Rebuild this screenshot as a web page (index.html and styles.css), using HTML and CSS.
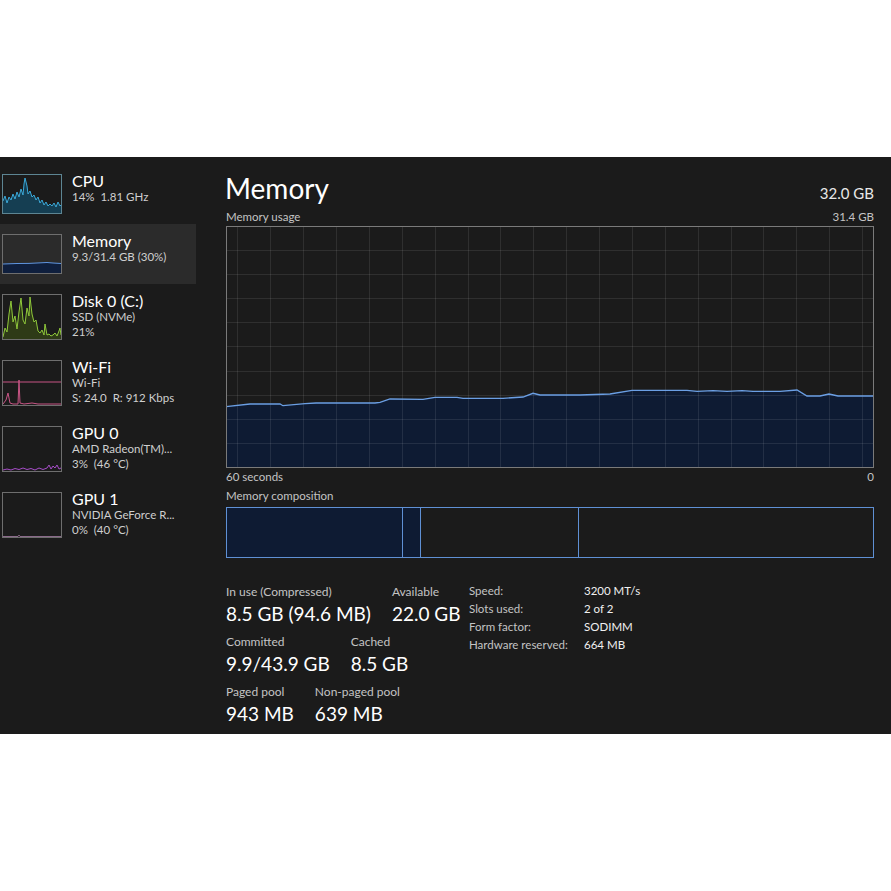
FILE: index.html
```html
<!DOCTYPE html>
<html lang="en">

<head>
  <meta charset="UTF-8">
  <meta name="viewport" content="width=device-width, initial-scale=1.0">
  <title>Task Manager - Memory</title>
  <link rel="stylesheet" href="styles.css">
</head>

<body>
  <div class="tm">
    <nav class="side">
      <div class="item">
        <div class="thumb thumb-cpu">
          <svg viewBox="0 0 58 38" preserveAspectRatio="none">
            <path class="fill" fill="#153e52" d="M0,38 L0,26 2,21 4,28 6,22 8,25 10,19 12,24 14,17 16,22 18,14 20,20 21,9 22,3 24,11 25,19 27,16 29,22 31,20 33,25 35,22 37,28 39,25 41,30 43,27 45,31 47,29 49,31 51,28 53,32 55,27 57,31 58,30 58,38 Z" />
            <polyline stroke="#3aa8d8" points="0,26 2,21 4,28 6,22 8,25 10,19 12,24 14,17 16,22 18,14 20,20 21,9 22,3 24,11 25,19 27,16 29,22 31,20 33,25 35,22 37,28 39,25 41,30 43,27 45,31 47,29 49,31 51,28 53,32 55,27 57,31 58,30" />
          </svg>
        </div>
        <div class="info">
          <div class="name">CPU</div>
          <div class="sub">14%&nbsp; 1.81 GHz</div>
        </div>
      </div>

      <div class="item active">
        <div class="thumb">
          <svg viewBox="0 0 58 38" preserveAspectRatio="none">
            <path fill="#0f1f3d" d="M0,38 L0,29 14,28.5 26,28.4 34,28 44,27.5 50,28 58,28.5 58,38 Z" />
            <polyline stroke="#5f95e0" points="0,29 14,28.5 26,28.4 34,28 44,27.5 50,28 58,28.5" />
          </svg>
        </div>
        <div class="info">
          <div class="name">Memory</div>
          <div class="sub">9.3/31.4 GB (30%)</div>
        </div>
      </div>

      <div class="item">
        <div class="thumb">
          <svg viewBox="0 0 58 44" preserveAspectRatio="none">
            <path fill="#2e3a17" d="M0,44 L0,42 2,33 4,37 6,19 8,6 10,27 12,21 14,34 16,17 18,3 20,25 22,29 24,13 26,21 27,2 29,19 31,27 33,25 35,36 37,38 39,35 41,40 42,29 44,40 46,39 48,41 50,40 52,38 54,41 56,36 57,33 58,40 58,44 Z" />
            <polyline stroke="#8fc83a" points="0,42 2,33 4,37 6,19 8,6 10,27 12,21 14,34 16,17 18,3 20,25 22,29 24,13 26,21 27,2 29,19 31,27 33,25 35,36 37,38 39,35 41,40 42,29 44,40 46,39 48,41 50,40 52,38 54,41 56,36 57,33 58,40" />
          </svg>
        </div>
        <div class="info">
          <div class="name">Disk 0 (C:)</div>
          <div class="sub">SSD (NVMe)</div>
          <div class="sub">21%</div>
        </div>
      </div>

      <div class="item">
        <div class="thumb">
          <svg viewBox="0 0 58 44" preserveAspectRatio="none">
            <line x1="0" y1="21" x2="58" y2="21" stroke="#c85585" />
            <polyline stroke="#c85585" points="0,43 3,39 5,32 7,42 10,43 15,43 16,19 17,42 21,43 29,42 35,43 58,43" />
          </svg>
        </div>
        <div class="info">
          <div class="name">Wi-Fi</div>
          <div class="sub">Wi-Fi</div>
          <div class="sub">S: 24.0&nbsp; R: 912 Kbps</div>
        </div>
      </div>

      <div class="item">
        <div class="thumb">
          <svg viewBox="0 0 58 44" preserveAspectRatio="none">
            <polyline stroke="#a74dc9" points="0,43 4,42 8,43 12,41.5 16,42.5 20,41 24,42.5 28,41.5 32,43 36,41 40,42.5 44,41 46,38 48,42 50,39 52,41 54,38 56,42 58,41" />
          </svg>
        </div>
        <div class="info">
          <div class="name">GPU 0</div>
          <div class="sub">AMD Radeon(TM)...</div>
          <div class="sub">3%&nbsp; (46 °C)</div>
        </div>
      </div>

      <div class="item">
        <div class="thumb">
          <svg viewBox="0 0 58 44" preserveAspectRatio="none">
            <polyline stroke="#8a6a8a" points="0,43.5 15,43.5 16,42 17,43.5 58,43.5" />
          </svg>
        </div>
        <div class="info">
          <div class="name">GPU 1</div>
          <div class="sub">NVIDIA GeForce R...</div>
          <div class="sub">0%&nbsp; (40 °C)</div>
        </div>
      </div>
    </nav>

    <main class="main">
      <div class="head">
        <h1>Memory</h1>
        <span class="total">32.0 GB</span>
      </div>

      <div class="caption">
        <span>Memory usage</span>
        <span>31.4 GB</span>
      </div>
      <svg class="chart" width="648" height="242" viewBox="0 0 648 242">
        <path fill="#0e1b33" d="M0,242 L0,180.7 24,178 54,178 57,179.7 79,177.7 90,177 149,177 154,176.3 164,173 197,173.3 209,171.3 231,171.3 237,172.3 277,172.3 297,171 307,167.3 314,169 354,169 384,168 406,164.3 461,164.3 471,165.3 487,164.7 501,165.3 516,164.7 527,165.3 554,165.3 571,164 581,170 594,170 603,168 612,170 648,170 648,242 Z" />
        <g class="grid">
          <line x1="11.5" y1="0" x2="11.5" y2="242" />
          <line x1="44.5" y1="0" x2="44.5" y2="242" />
          <line x1="77.5" y1="0" x2="77.5" y2="242" />
          <line x1="110.5" y1="0" x2="110.5" y2="242" />
          <line x1="143.5" y1="0" x2="143.5" y2="242" />
          <line x1="176.5" y1="0" x2="176.5" y2="242" />
          <line x1="209.5" y1="0" x2="209.5" y2="242" />
          <line x1="242.5" y1="0" x2="242.5" y2="242" />
          <line x1="274.5" y1="0" x2="274.5" y2="242" />
          <line x1="307.5" y1="0" x2="307.5" y2="242" />
          <line x1="340.5" y1="0" x2="340.5" y2="242" />
          <line x1="373.5" y1="0" x2="373.5" y2="242" />
          <line x1="406.5" y1="0" x2="406.5" y2="242" />
          <line x1="439.5" y1="0" x2="439.5" y2="242" />
          <line x1="472.5" y1="0" x2="472.5" y2="242" />
          <line x1="505.5" y1="0" x2="505.5" y2="242" />
          <line x1="537.5" y1="0" x2="537.5" y2="242" />
          <line x1="570.5" y1="0" x2="570.5" y2="242" />
          <line x1="603.5" y1="0" x2="603.5" y2="242" />
          <line x1="636.5" y1="0" x2="636.5" y2="242" />
          <line x1="0" y1="24.5" x2="648" y2="24.5" />
          <line x1="0" y1="48.5" x2="648" y2="48.5" />
          <line x1="0" y1="72.5" x2="648" y2="72.5" />
          <line x1="0" y1="96.5" x2="648" y2="96.5" />
          <line x1="0" y1="120.5" x2="648" y2="120.5" />
          <line x1="0" y1="145.5" x2="648" y2="145.5" />
          <line x1="0" y1="169.5" x2="648" y2="169.5" />
          <line x1="0" y1="193.5" x2="648" y2="193.5" />
          <line x1="0" y1="217.5" x2="648" y2="217.5" />
        </g>
        <polyline class="usage" points="0,180.7 24,178 54,178 57,179.7 79,177.7 90,177 149,177 154,176.3 164,173 197,173.3 209,171.3 231,171.3 237,172.3 277,172.3 297,171 307,167.3 314,169 354,169 384,168 406,164.3 461,164.3 471,165.3 487,164.7 501,165.3 516,164.7 527,165.3 554,165.3 571,164 581,170 594,170 603,168 612,170 648,170" />
        <rect class="frame" x="0.5" y="0.5" width="647" height="241" />
      </svg>
      <div class="caption axis">
        <span>60 seconds</span>
        <span>0</span>
      </div>

      <div class="caption comp-title">Memory composition</div>
      <div class="comp">
        <div class="seg used" style="width: 176px"></div>
        <div class="seg used" style="width: 18px"></div>
        <div class="seg" style="width: 158px"></div>
        <div class="seg last"></div>
      </div>

      <div class="stats">
        <div class="stat-left">
          <div class="stat-row">
            <div class="stat">
              <div class="label">In use (Compressed)</div>
              <div class="value">8.5 GB (94.6 MB)</div>
            </div>
            <div class="stat">
              <div class="label">Available</div>
              <div class="value">22.0 GB</div>
            </div>
          </div>
          <div class="stat-row">
            <div class="stat">
              <div class="label">Committed</div>
              <div class="value">9.9/43.9 GB</div>
            </div>
            <div class="stat">
              <div class="label">Cached</div>
              <div class="value">8.5 GB</div>
            </div>
          </div>
          <div class="stat-row">
            <div class="stat">
              <div class="label">Paged pool</div>
              <div class="value">943 MB</div>
            </div>
            <div class="stat">
              <div class="label">Non-paged pool</div>
              <div class="value">639 MB</div>
            </div>
          </div>
        </div>

        <dl class="specs">
          <dt>Speed:</dt>
          <dd>3200 MT/s</dd>
          <dt>Slots used:</dt>
          <dd>2 of 2</dd>
          <dt>Form factor:</dt>
          <dd>SODIMM</dd>
          <dt>Hardware reserved:</dt>
          <dd>664 MB</dd>
        </dl>
      </div>
    </main>
  </div>
</body>

</html>
```

FILE: styles.css
```css
* {
  box-sizing: border-box;
}

body {
  margin: 0;
  background: #fff;
  font-family: Lato, "Noto Sans", sans-serif;
}

.tm {
  display: flex;
  margin-top: 157px;
  height: 577px;
  background: #1b1b1b;
  color: #fff;
}

/* left list */

.side {
  width: 196px;
  padding-top: 7px;
}

.item {
  display: flex;
  gap: 10px;
  padding: 10px 0 10px 2px;
}

.item.active {
  background: #2b2b2b;
}

.thumb {
  width: 60px;
  min-height: 40px;
  border: 1px solid #6e6e6e;
  flex-shrink: 0;
}

.thumb-cpu {
  border-color: #5d8593;
}

.thumb svg {
  display: block;
  width: 100%;
  height: 100%;
}

.thumb polyline,
.thumb line {
  fill: none;
  stroke-width: 1;
  vector-effect: non-scaling-stroke;
}

.name {
  font-size: 16px;
  line-height: 16px;
  margin-top: -1px;
  white-space: nowrap;
}

.sub {
  font-size: 11.5px;
  line-height: 15px;
  color: #cfcfcf;
  white-space: nowrap;
}

/* main panel */

.main {
  flex: 1;
  padding: 14px 17px 0 30px;
}

.head {
  display: flex;
  justify-content: space-between;
  align-items: baseline;
}

h1 {
  margin: 0 0 0 -1px;
  font-size: 28px;
  line-height: 34px;
  font-weight: 400;
}

.total {
  font-size: 15px;
  color: #e8e8e8;
}

.caption {
  display: flex;
  justify-content: space-between;
  font-size: 11.5px;
  line-height: 15px;
  color: #c4c4c4;
  margin: 4px 0 2px;
}

.chart {
  display: block;
}

.grid line {
  stroke: rgba(255, 255, 255, 0.09);
  stroke-width: 1;
}

.usage {
  fill: none;
  stroke: #6b9fe4;
  stroke-width: 1.3;
}

.frame {
  fill: none;
  stroke: #7a7a7a;
  stroke-width: 1;
}

.axis {
  margin: 1px 0 0;
}

.comp-title {
  margin: 4px 0 4px;
}

.comp {
  display: flex;
  height: 51px;
  border: 1px solid #5f90d4;
}

.seg {
  border-right: 1px solid #5f90d4;
}

.seg.used {
  background: #0e1b33;
}

.seg.last {
  flex: 1;
  border-right: none;
}

/* numbers */

.stats {
  display: flex;
  margin-top: 26px;
}

.stat-left {
  width: 243px;
}

.stat-row {
  display: flex;
  gap: 21px;
  margin-bottom: 8px;
}

.label {
  font-size: 12px;
  line-height: 15px;
  color: #c4c4c4;
  white-space: nowrap;
}

.value {
  margin-top: 3px;
  font-size: 19px;
  line-height: 24px;
  white-space: nowrap;
}

.specs {
  display: grid;
  grid-template-columns: 115px auto;
  align-content: start;
  margin: -2px 0 0;
  font-size: 11.5px;
  line-height: 18px;
}

.specs dt {
  color: #c4c4c4;
}

.specs dd {
  margin: 0;
  color: #f0f0f0;
}
```
